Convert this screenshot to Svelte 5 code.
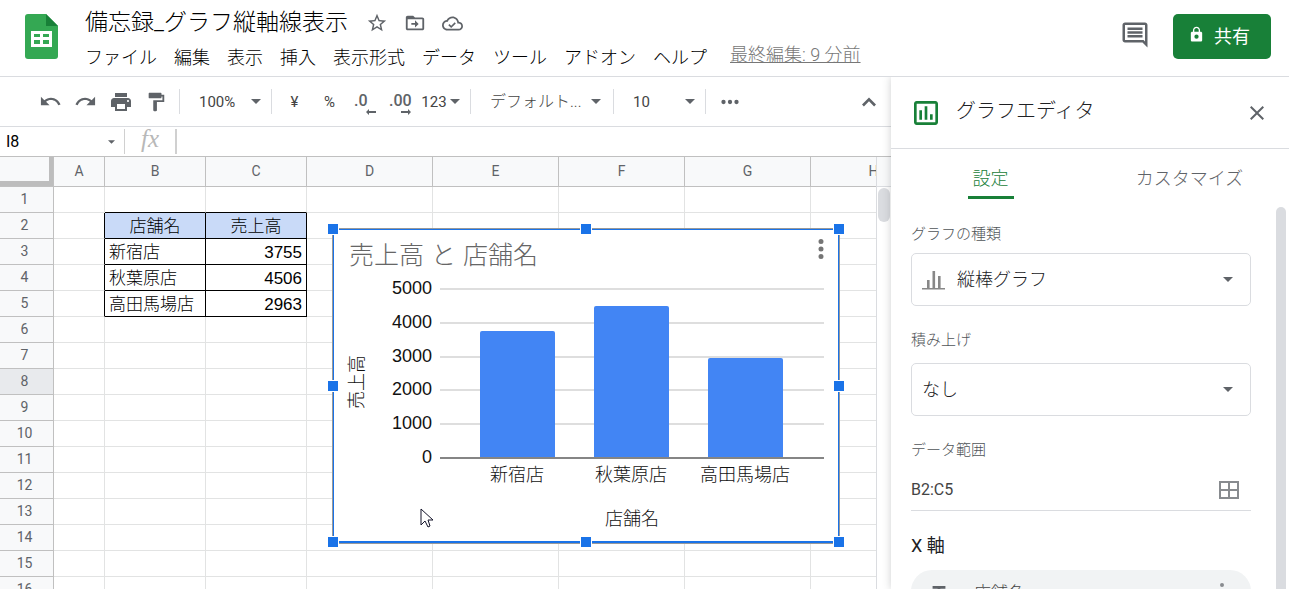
<script lang="ts">
  const menus = ['ファイル', '編集', '表示', '挿入', '表示形式', 'データ', 'ツール', 'アドオン', 'ヘルプ'];
  const columns = ['A', 'B', 'C', 'D', 'E', 'F', 'G', 'H'];
  const widths = [51, 101, 101, 126, 126, 126, 126, 126];
  const rows = Array.from({ length: 16 }, (_, i) => i + 1);
  const activeRow = 8;

  const cells: Record<string, string> = {
    B2: '店舗名',
    C2: '売上高',
    B3: '新宿店',
    C3: '3755',
    B4: '秋葉原店',
    C4: '4506',
    B5: '高田馬場店',
    C5: '2963'
  };

  const shops = [
    { name: '新宿店', sales: 3755 },
    { name: '秋葉原店', sales: 4506 },
    { name: '高田馬場店', sales: 2963 }
  ];
  const ticks = [5000, 4000, 3000, 2000, 1000, 0];
  const scaleY = (value: number) => 229 - (value * 169) / 5000;

  const handles = ['nw', 'n', 'ne', 'w', 'e', 'sw', 's', 'se'];

  const icons = {
    star: 'M22 9.24l-7.19-.62L12 2 9.19 8.63 2 9.24l5.46 4.73L5.82 21 12 17.27 18.18 21l-1.63-7.03L22 9.24zM12 15.4l-3.76 2.27 1-4.28-3.32-2.88 4.38-.38L12 6.1l1.71 4.04 4.38.38-3.32 2.88 1 4.28L12 15.4z',
    move: 'M20 6h-8l-2-2H4c-1.1 0-2 .9-2 2v12c0 1.1.9 2 2 2h16c1.1 0 2-.9 2-2V8c0-1.1-.9-2-2-2zm0 12H4V8h16v10zM12 17l4-4-4-4v3H8v2h4z',
    cloud: 'M19.35 10.04C18.67 6.59 15.64 4 12 4 9.11 4 6.6 5.64 5.35 8.04 2.34 8.36 0 10.91 0 14c0 3.31 2.69 6 6 6h13c2.76 0 5-2.24 5-5 0-2.64-2.05-4.78-4.65-4.96zM19 18H6c-2.21 0-4-1.79-4-4s1.79-4 4-4h.71C7.37 7.69 9.48 6 12 6c3.04 0 5.5 2.46 5.5 5.5v.5H19c1.66 0 3 1.34 3 3s-1.34 3-3 3zm-8.5-3.4l-2-2-1.3 1.3 3.3 3.3 5.3-5.3-1.3-1.3z',
    comment: 'M21.99 4c0-1.1-.89-2-1.99-2H4c-1.1 0-2 .9-2 2v12c0 1.1.9 2 2 2h14l4 4-.01-18zM20 4v13.17L18.83 16H4V4h16zM6 12h12v2H6zm0-3h12v2H6zm0-3h12v2H6z',
    lock: 'M18 8h-1V6c0-2.76-2.24-5-5-5S7 3.24 7 6v2H6c-1.1 0-2 .9-2 2v10c0 1.1.9 2 2 2h12c1.1 0 2-.9 2-2V10c0-1.1-.9-2-2-2zm-6 10a3 3 0 1 1 0-6 3 3 0 0 1 0 6zm3.1-10H8.9V6c0-1.71 1.39-3.1 3.1-3.1 1.71 0 3.1 1.39 3.1 3.1v2z',
    undo: 'M12.5 8c-2.65 0-5.05.99-6.9 2.6L2 7v9h9l-3.62-3.62c1.39-1.16 3.16-1.88 5.12-1.88 3.54 0 6.55 2.31 7.6 5.5l2.37-.78C21.08 11.03 17.15 8 12.5 8z',
    redo: 'M18.4 10.6C16.55 8.99 14.15 8 11.5 8c-4.65 0-8.58 3.03-9.96 7.22L3.9 16c1.05-3.19 4.05-5.5 7.6-5.5 1.95 0 3.73.72 5.12 1.88L13 16h9V7l-3.6 3.6z',
    print: 'M19 8H5c-1.66 0-3 1.34-3 3v6h4v4h12v-4h4v-6c0-1.66-1.34-3-3-3zm-3 11H8v-5h8v5zm3-7c-.55 0-1-.45-1-1s.45-1 1-1 1 .45 1 1-.45 1-1 1zm-1-9H6v4h12V3z',
    paint: 'M18 4V3c0-.55-.45-1-1-1H5c-.55 0-1 .45-1 1v4c0 .55.45 1 1 1h12c.55 0 1-.45 1-1V6h1v4H9v11c0 .55.45 1 1 1h2c.55 0 1-.45 1-1v-9h8V4h-3z',
    more: 'M6 10a2 2 0 1 0 0 4 2 2 0 0 0 0-4zm6 0a2 2 0 1 0 0 4 2 2 0 0 0 0-4zm6 0a2 2 0 1 0 0 4 2 2 0 0 0 0-4z',
    vert: 'M12 8a2 2 0 1 0 0-4 2 2 0 0 0 0 4zm0 2a2 2 0 1 0 0 4 2 2 0 0 0 0-4zm0 6a2 2 0 1 0 0 4 2 2 0 0 0 0-4z',
    up: 'M12 7.5l-7 7 1.9 1.9 5.1-5.1 5.1 5.1 1.9-1.9z',
    chart: 'M9 17H7v-7h2v7zm4 0h-2V7h2v10zm4 0h-2v-4h2v4zm2-14H5c-1.1 0-2 .9-2 2v14c0 1.1.9 2 2 2h14c1.1 0 2-.9 2-2V5c0-1.1-.9-2-2-2zm0 16H5V5h14v14z',
    close: 'M19 6.41L17.59 5 12 10.59 6.41 5 5 6.41 10.59 12 5 17.59 6.41 19 12 13.41 17.59 19 19 17.59 13.41 12z',
    columns: 'M0 20h23v1.5H0zM5 12h2.6v8H5zM10.5 3h2.6v17h-2.6zM16 8h2.6v12H16z',
    range: 'M2 3h20v18H2zM4 5v6h7V5zM13 5v6h7V5zM4 13v6h7v-6zM13 13v6h7v-6z',
    text: 'M5 6.5v3h5.5v10h3v-10H19v-3z'
  };

  let tab = $state('設定');

  function cellClass(col: string, row: number) {
    const inTable = row >= 2 && row <= 5;
    const data = col === 'B' || col === 'C';
    return {
      head: data && row === 2,
      num: col === 'C' && row > 2,
      'line-right': inTable && (data || col === 'A'),
      'line-bottom': data && row >= 1 && row <= 5
    };
  }
</script>

{#snippet icon(name: keyof typeof icons, size: number)}
  <svg class="icon" width={size} height={size} viewBox="0 0 24 24" aria-hidden="true">
    <path d={icons[name]} fill-rule="evenodd" />
  </svg>
{/snippet}

{#snippet arrow()}
  <svg class="arrow" width="10" height="5" viewBox="0 0 10 5" aria-hidden="true"><path d="M0 0h10L5 5z" /></svg>
{/snippet}

<div class="app">
  <header>
    <svg class="logo" width="33" height="46" viewBox="0 0 33 46" aria-hidden="true">
      <path d="M3 0h18l12 12v30a3 3 0 0 1-3 3H3a3 3 0 0 1-3-3V3a3 3 0 0 1 3-3z" fill="#34a853" />
      <path d="M21 0l12 12H21z" fill="#188038" />
      <path d="M6 17h21v16H6zM9 20v3h6v-3zM18 20v3h6v-3zM9 26v4h6v-4zM18 26v4h6v-4z" fill="#fff" fill-rule="evenodd" />
    </svg>
    <div class="doc">
      <div class="title-row">
        <h1>備忘録_グラフ縦軸線表示</h1>
        <button type="button" aria-label="スター">{@render icon('star', 22)}</button>
        <button type="button" aria-label="移動">{@render icon('move', 22)}</button>
        <button type="button" aria-label="保存済み">{@render icon('cloud', 21)}</button>
      </div>
      <nav>
        {#each menus as menu}
          <button type="button">{menu}</button>
        {/each}
        <a href="#history">最終編集: 9 分前</a>
      </nav>
    </div>
    <button class="comment" type="button" aria-label="コメント">{@render icon('comment', 30)}</button>
    <button class="share" type="button">{@render icon('lock', 17)}共有</button>
  </header>

  <div class="main">
    <div class="work">
      <div class="toolbar">
        <button type="button" aria-label="元に戻す">{@render icon('undo', 23)}</button>
        <button type="button" aria-label="やり直し">{@render icon('redo', 23)}</button>
        <button type="button" aria-label="印刷">{@render icon('print', 24)}</button>
        <button type="button" aria-label="書式を貼り付け">{@render icon('paint', 22)}</button>
        <div class="pick zoom">
          <select aria-label="ズーム"><option>100%</option></select>
          {@render arrow()}
        </div>
        <button class="first" type="button">¥</button>
        <button type="button">%</button>
        <button class="decimal" type="button" aria-label="小数点以下の桁数を減らす">
          .0<svg width="10" height="6" viewBox="0 0 10 6"><path d="M0 3l3-3v2h7v2H3v2z" /></svg>
        </button>
        <button class="decimal" type="button" aria-label="小数点以下の桁数を増やす">
          .00<svg width="10" height="6" viewBox="0 0 10 6"><path d="M10 3L7 0v2H0v2h7v2z" /></svg>
        </button>
        <button class="format" type="button">123{@render arrow()}</button>
        <div class="pick font">
          <select aria-label="フォント"><option>デフォルト...</option></select>
          {@render arrow()}
        </div>
        <div class="pick size">
          <select aria-label="フォントサイズ"><option>10</option></select>
          {@render arrow()}
        </div>
        <button class="more" type="button" aria-label="その他">{@render icon('more', 26)}</button>
        <button class="hide" type="button" aria-label="メニューを非表示">{@render icon('up', 24)}</button>
      </div>

      <div class="formula">
        <input class="name" aria-label="名前ボックス" value="I8" />
        <svg class="arrow" width="7" height="4" viewBox="0 0 10 5" aria-hidden="true"><path d="M0 0h10L5 5z" /></svg>
        <label for="fx">fx</label>
        <input id="fx" class="fx" />
      </div>

      <div class="sheet">
        <div class="cells">
          <table>
            <colgroup>
              <col style="width: 54px" />
              {#each widths as width}
                <col style="width: {width}px" />
              {/each}
            </colgroup>
            <thead>
              <tr>
                <th class="corner" aria-label="すべて選択"></th>
                {#each columns as col}
                  <th scope="col">{col}</th>
                {/each}
              </tr>
            </thead>
            <tbody>
              {#each rows as row}
                <tr>
                  <th scope="row" class:active={row === activeRow}>{row}</th>
                  {#each columns as col}
                    <td class={cellClass(col, row)}>{cells[col + row] ?? ''}</td>
                  {/each}
                </tr>
              {/each}
            </tbody>
          </table>

          <div class="chart">
            <svg width="504" height="311" viewBox="0 0 504 311" role="img" aria-label="売上高 と 店舗名">
              <text class="chart-title" x="15" y="34">売上高 と 店舗名</text>
              {#each ticks as tick}
                <text class="label" x="98" y={Math.round(scaleY(tick)) + 4} text-anchor="end">{tick}</text>
                <rect x="106" y={Math.round(scaleY(tick)) - 2} width="384" height="2" fill={tick ? '#dedede' : '#858585'} />
              {/each}
              {#each shops as shop, i}
                {@const top = Math.round(scaleY(shop.sales)) - 1}
                <path
                  d="M{146 + i * 114} 227V{top + 2}q0-2 2-2h71q2 0 2 2V227z"
                  fill="#4285f4"
                />
                <text class="label" x={183 + i * 114} y="251" text-anchor="middle">{shop.name}</text>
              {/each}
              <text class="label" x="298" y="295" text-anchor="middle">店舗名</text>
              <text class="label" transform="translate(29 152) rotate(-90)" text-anchor="middle">売上高</text>
            </svg>
            <button class="chart-menu" type="button" aria-label="グラフのメニュー">{@render icon('vert', 30)}</button>
            {#each handles as handle}
              <span class="handle {handle}"></span>
            {/each}
          </div>

          <svg class="cursor" width="14" height="21" viewBox="0 0 14 21" aria-hidden="true">
            <path d="M1 1v16l4-4 3 6 2-1-2-6h5z" fill="#fff" stroke="#15152b" />
          </svg>
        </div>
        <div class="scroll"><span></span></div>
      </div>
    </div>

    <aside>
      <div class="panel-head">
        {@render icon('chart', 32)}
        <h2>グラフエディタ</h2>
        <button type="button" aria-label="閉じる">{@render icon('close', 24)}</button>
      </div>
      <div class="tabs" role="tablist">
        {#each ['設定', 'カスタマイズ'] as name}
          <button type="button" role="tab" aria-selected={tab === name} onclick={() => (tab = name)}>
            <span>{name}</span>
          </button>
        {/each}
      </div>
      <div class="panel-body">
        <form>
          <label for="type">グラフの種類</label>
          <div class="field with-icon">
            {@render icon('columns', 24)}
            <select id="type"><option>縦棒グラフ</option></select>
            {@render arrow()}
          </div>
          <label for="stack">積み上げ</label>
          <div class="field">
            <select id="stack"><option>なし</option></select>
            {@render arrow()}
          </div>
          <label for="range">データ範囲</label>
          <div class="range">
            <input id="range" value="B2:C5" />
            <button type="button" aria-label="データ範囲を選択">{@render icon('range', 24)}</button>
          </div>
          <h3>X 軸</h3>
          <div class="chip">
            {@render icon('text', 22)}
            <span>店舗名</span>
            <button type="button" aria-label="その他">{@render icon('vert', 24)}</button>
          </div>
        </form>
        <div class="panel-scroll"></div>
      </div>
    </aside>
  </div>
</div>

<style>
  :global(body) {
    margin: 0;
  }

  .app {
    display: flex;
    flex-direction: column;
    height: 100vh;
    overflow: hidden;
    background: #fff;
    color: #202124;
    font-family: Roboto, 'Noto Sans CJK JP', sans-serif;
    font-weight: 300;
  }

  .app * {
    box-sizing: border-box;
  }

  button,
  input,
  select {
    border: 0;
    padding: 0;
    margin: 0;
    background: none;
    color: inherit;
    font: inherit;
    outline: none;
    appearance: none;
  }

  button {
    display: flex;
    align-items: center;
    justify-content: center;
    flex: none;
    white-space: nowrap;
  }

  h1,
  h2,
  h3 {
    margin: 0;
    font-weight: 300;
    white-space: nowrap;
  }

  .icon {
    display: block;
    flex: none;
    fill: #5f6368;
  }

  .arrow {
    flex: none;
    fill: #5f6368;
    pointer-events: none;
  }

  header {
    display: flex;
    align-items: flex-start;
    flex: none;
    height: 77px;
    padding: 0 18px 0 25px;
    border-bottom: 1px solid #dadce0;
  }

  .logo {
    flex: none;
    margin-top: 14px;
  }

  .doc {
    flex: 1;
    min-width: 0;
    margin-left: 27px;
    padding-top: 6px;
  }

  .title-row {
    display: flex;
    align-items: center;
    gap: 16px;
    height: 34px;
  }

  h1 {
    margin-right: 2px;
    font-size: 23px;
    line-height: 34px;
    color: #000;
  }

  nav {
    display: flex;
    gap: 17px;
    font-size: 18px;
    line-height: 36px;
    color: #000;
  }

  nav a {
    margin-left: 6px;
    line-height: 29px;
    color: #777;
    white-space: nowrap;
  }

  .comment {
    margin-top: 20px;
  }

  .share {
    gap: 9px;
    width: 98px;
    height: 45px;
    margin: 14px 0 0 23px;
    padding: 0 6px 4px 0;
    border-radius: 5px;
    background: #188038;
    color: #fff;
    font-size: 18px;
    font-weight: 400;
  }

  .share .icon {
    fill: #fff;
  }

  .main {
    display: flex;
    flex: 1;
    min-height: 0;
  }

  .work {
    display: flex;
    flex-direction: column;
    flex: 1;
    min-width: 0;
  }

  .toolbar {
    display: flex;
    align-items: center;
    flex: none;
    height: 50px;
    padding: 0 5px 0 33px;
    border-bottom: 1px solid #dadce0;
    font-size: 15px;
    font-weight: 400;
    color: #444;
  }

  .toolbar button {
    width: 35px;
    height: 30px;
  }

  .pick {
    display: flex;
    align-items: center;
    flex: none;
    height: 25px;
    padding-right: 10px;
    border: solid #dadce0;
    border-width: 0 1px;
  }

  .pick select {
    flex: 1;
    min-width: 0;
    height: 24px;
    padding-left: 19px;
  }

  .zoom {
    width: 93px;
    margin-left: 6px;
  }

  .font {
    width: 144px;
    margin-left: 6px;
    padding-right: 12px;
    font-size: 16px;
    font-weight: 300;
  }

  .size {
    width: 92px;
    border-left: 0;
  }

  .toolbar .first {
    margin-left: 5px;
  }

  .toolbar .decimal {
    position: relative;
    justify-content: flex-start;
    padding: 0 0 2px 7px;
    font-size: 16px;
    font-weight: 500;
    color: #5f6368;
  }

  .decimal svg {
    position: absolute;
    right: 6px;
    bottom: 2px;
    fill: #5f6368;
  }

  .toolbar .format {
    gap: 3px;
    width: 47px;
  }

  .toolbar .more {
    margin-left: 6px;
  }

  .toolbar .hide {
    margin-left: auto;
  }

  .formula {
    display: flex;
    align-items: center;
    flex: none;
    height: 30px;
    border-bottom: 1px solid #c0c0c0;
    font-size: 16px;
    font-weight: 400;
    color: #000;
  }

  .name {
    width: 108px;
    height: 26px;
    padding-left: 6px;
  }

  .formula label {
    width: 53px;
    height: 25px;
    margin-left: 9px;
    border: solid #d0d0d0;
    border-width: 0 2px 0 1px;
    text-align: center;
    font: italic 25px/20px 'Liberation Serif', serif;
    color: #b8b8b8;
  }

  .fx {
    flex: 1;
    min-width: 0;
    height: 26px;
    padding-left: 6px;
  }

  .sheet {
    display: flex;
    flex: 1;
    min-height: 0;
  }

  .cells {
    position: relative;
    flex: 1;
    min-width: 0;
    overflow: hidden;
  }

  table {
    width: 937px;
    table-layout: fixed;
    border-collapse: separate;
    border-spacing: 0;
  }

  th,
  td {
    height: 26px;
    padding: 2px 4px 0;
    border: solid #e2e3e3;
    border-width: 0 1px 1px 0;
    line-height: 20px;
    white-space: nowrap;
  }

  th {
    padding: 0 4px 2px;
    border-color: #c0c0c0;
    background: #f8f9fa;
    color: #5f6368;
    font-size: 14px;
    font-weight: 400;
  }

  thead th {
    height: 30px;
  }

  tbody th {
    padding-right: 8px;
  }

  .corner {
    box-shadow: inset -4px -5px 0 #bdbdbd;
  }

  .active {
    background: #e8eaed;
  }

  td {
    font-family: 'Liberation Sans', 'Noto Sans CJK JP', sans-serif;
    font-size: 17px;
    color: #000;
  }

  .head {
    background: #c9daf8;
    text-align: center;
  }

  .num {
    text-align: right;
  }

  .line-right {
    border-right-color: #000;
  }

  .line-bottom {
    border-bottom-color: #000;
  }

  .chart {
    position: absolute;
    left: 333px;
    top: 72px;
    width: 506px;
    height: 314px;
    border: 1px solid #1a73e8;
    border-bottom-width: 2px;
    background: #fff;
    box-shadow: 0 0 0 1px #999;
  }

  .chart > svg {
    display: block;
    font-family: 'Liberation Sans', 'Noto Sans CJK JP', sans-serif;
  }

  .chart-title {
    font-size: 25px;
    fill: #666;
  }

  .label {
    font-size: 18px;
    fill: #111;
  }

  .chart-menu {
    position: absolute;
    top: 4px;
    right: 2px;
  }

  .chart-menu .icon {
    fill: #757575;
  }

  .handle {
    position: absolute;
    width: 12px;
    height: 12px;
    border: 1px solid #fff;
    background: #1a73e8;
  }

  .nw,
  .w,
  .sw {
    left: -7px;
  }

  .n,
  .s {
    left: calc(50% - 6px);
  }

  .ne,
  .e,
  .se {
    right: -7px;
  }

  .nw,
  .n,
  .ne {
    top: -7px;
  }

  .w,
  .e {
    top: calc(50% - 6px);
  }

  .sw,
  .s,
  .se {
    bottom: -7px;
  }

  .cursor {
    position: absolute;
    left: 420px;
    top: 351px;
  }

  .scroll {
    flex: none;
    width: 15px;
    border-left: 1px solid #dadce0;
    background: linear-gradient(#f8f9fa 29px, #dadce0 29px, #dadce0 30px, #fff 30px);
  }

  .scroll span {
    display: block;
    width: 12px;
    height: 34px;
    margin: 31px 0 0 1px;
    border-radius: 6px;
    background: #dadce0;
  }

  aside {
    display: flex;
    flex-direction: column;
    flex: none;
    width: 398px;
    background: #fff;
    box-shadow: 0 0 8px rgba(60, 64, 67, 0.25);
    clip-path: inset(0 0 0 -12px);
  }

  .panel-head {
    display: flex;
    align-items: center;
    flex: none;
    height: 72px;
    padding: 0 20px 0 19px;
    border-bottom: 1px solid #dadce0;
  }

  .panel-head .icon {
    fill: #188038;
  }

  .panel-head button .icon {
    fill: #5f6368;
  }

  h2 {
    flex: 1;
    margin-left: 14px;
    padding-bottom: 4px;
    font-size: 20px;
    line-height: 32px;
  }

  .tabs {
    display: flex;
    flex: none;
    height: 50px;
  }

  .tabs button {
    flex: 1;
    align-items: stretch;
    font-size: 18px;
    line-height: 28px;
    color: #5f6368;
  }

  .tabs span {
    padding: 16px 5px 0;
  }

  .tabs [aria-selected='true'] {
    color: #188038;
  }

  .tabs [aria-selected='true'] span {
    border-bottom: 3px solid #188038;
  }

  .panel-body {
    display: flex;
    flex: 1;
    min-height: 0;
    padding-left: 20px;
  }

  form {
    flex: 1;
    min-width: 0;
    padding-top: 21px;
    overflow: hidden;
  }

  form label {
    display: block;
    height: 33px;
    font-size: 15px;
    line-height: 28px;
    color: #505458;
  }

  .field {
    display: flex;
    align-items: center;
    height: 53px;
    margin-bottom: 20px;
    padding: 0 17px 0 10px;
    border: 1px solid #dadce0;
    border-radius: 5px;
    font-size: 18px;
  }

  .field + label {
    height: 37px;
  }

  .field select {
    flex: 1;
    min-width: 0;
    height: 32px;
  }

  .with-icon {
    gap: 11px;
  }

  .with-icon .icon {
    fill: #888;
  }

  .range {
    display: flex;
    align-items: center;
    justify-content: space-between;
    height: 38px;
    margin-bottom: 20px;
    padding: 0 10px 4px 0;
    border-bottom: 1px solid #dadce0;
    font-size: 16px;
    font-weight: 400;
    color: #444;
  }

  .range input {
    flex: 1;
    min-width: 0;
    height: 26px;
  }

  .range .icon {
    fill: #888b8f;
  }

  h3 {
    height: 39px;
    font-size: 18px;
    line-height: 30px;
    font-weight: 400;
  }

  .chip {
    display: flex;
    align-items: center;
    height: 42px;
    padding: 0 17px;
    border-radius: 21px;
    background: #f1f3f4;
    font-size: 17px;
    color: #444;
  }

  .chip span {
    flex: 1;
    margin-left: 24px;
  }

  .chip button .icon {
    fill: #888b8f;
  }

  .panel-scroll {
    flex: none;
    width: 10px;
    margin: 8px 3px 0 25px;
    border-radius: 5px 5px 0 0;
    background: #dadce0;
  }
</style>
